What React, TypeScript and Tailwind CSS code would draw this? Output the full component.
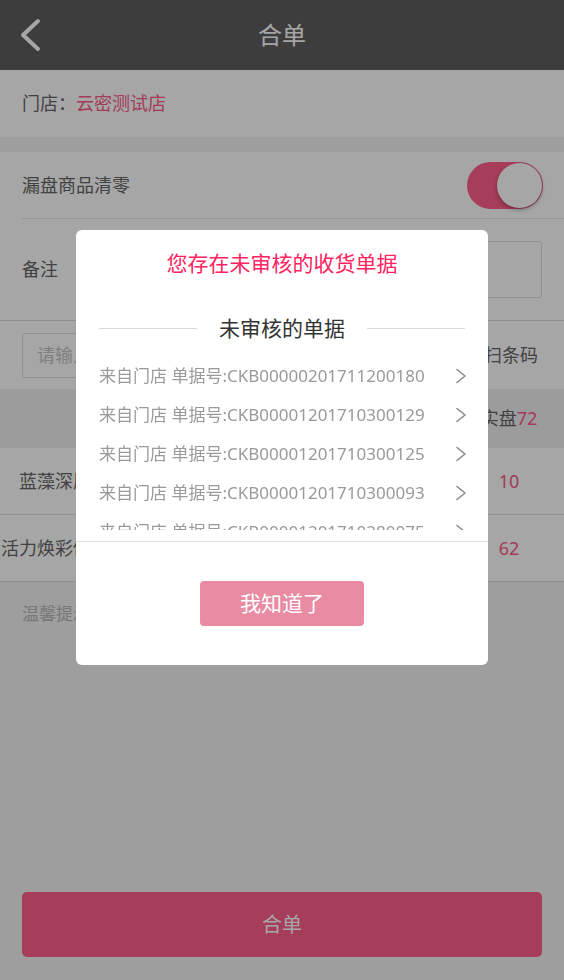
import React from "react";

const bills = [
  "CKB00000201711200180",
  "CKB00001201710300129",
  "CKB00001201710300125",
  "CKB00001201710300093",
  "CKB00001201710280075",
];

const items = [
  { name: "蓝藻深层补水睡眠膜", count: 10 },
  { name: "活力焕彩修护精华乳液霜", count: 62 },
];

function Chevron() {
  return (
    <svg width="12" height="16" viewBox="0 0 12 16" fill="none" stroke="#8a8a8a" strokeWidth="1.6" strokeLinecap="round" strokeLinejoin="round">
      <polyline points="2,1.5 10,8 2,14.5" />
    </svg>
  );
}

export default function App() {
  return (
    <div className="relative flex min-h-screen flex-col bg-[#f3f3f3] font-['Noto_Sans','Noto_Sans_CJK_SC',sans-serif]">
      {/* Header */}
      <header className="grid h-[70px] grid-cols-[80px_1fr_80px] items-center bg-[#5e5e5e]">
        <button className="pl-[18px]">
          <svg width="24" height="34" viewBox="0 0 24 34" fill="none" stroke="#ffffff" strokeWidth="4" strokeLinecap="round" strokeLinejoin="round">
            <polyline points="20,3 5,17 20,31" />
          </svg>
        </button>
        <h1 className="text-center text-[24px] leading-[32px] text-white">合单</h1>
        <div />
      </header>

      {/* Store */}
      <div className="flex h-[67px] items-center bg-white px-[22px] text-[18px]">
        <span className="text-[#666]">门店：</span>
        <span className="text-[#fb5a8a]">云密测试店</span>
      </div>

      {/* Options */}
      <div className="mt-[15px] bg-white">
        <div className="ml-[22px] flex h-[67px] items-center justify-between border-b border-[#e8e8e8] pr-[21px]">
          <span className="text-[18px] text-[#666]">漏盘商品清零</span>
          <div className="flex h-[47px] w-[76px] items-center justify-end rounded-full bg-[#ff5e8a] p-[1px]">
            <div className="h-[45px] w-[45px] rounded-full bg-white shadow-[0_2px_4px_rgba(0,0,0,0.3)]" />
          </div>
        </div>
        <div className="flex h-[102px] items-center border-b border-[#dcdcdc] px-[22px]">
          <span className="text-[18px] text-[#666]">备注</span>
          <div className="ml-auto h-[57px] w-[452px] rounded-[3px] border border-[#dddddd]" />
        </div>
      </div>

      {/* Search */}
      <div className="flex h-[68px] items-center bg-white px-[22px]">
        <div className="flex h-[45px] w-[450px] items-center rounded-[3px] border border-[#dddddd] pl-[14px] text-[18px] text-[#c4c4c4]">
          请输入商品条码
        </div>
        <span className="ml-auto pr-[4px] text-[18px] text-[#666]">扫条码</span>
      </div>

      {/* List */}
      <div className="grid h-[59px] grid-cols-[1fr_110px] items-center bg-[#f0f0f0] text-[18px] text-[#666]">
        <span />
        <span className="text-center">
          实盘<span className="text-[#fb5a8a]">72</span>
        </span>
      </div>
      {items.map((it) => (
        <div key={it.name} className="grid h-[67px] grid-cols-[200px_1fr_110px] items-center border-b border-[#e0e0e0] bg-white text-[18px]">
          <span className="whitespace-nowrap text-center text-[#666]">{it.name}</span>
          <span />
          <span className="text-center text-[#fb5a8a]">{it.count}</span>
        </div>
      ))}

      <p className="px-[22px] pt-[19px] text-[17px] leading-[26px] text-[#b8b8b8]">温馨提示：未盘点的商品将按零处理</p>

      <button className="mx-[22px] mb-[23px] mt-auto h-[65px] rounded-[5px] bg-[#ff5e8a] text-[20px] text-white">合单</button>

      {/* Dialog */}
      <div className="fixed inset-0 z-10 flex justify-center bg-black/35 pt-[230px]">
        <div className="flex h-[435px] w-[412px] flex-col rounded-[6px] bg-white">
          <h2 className="pt-[18px] text-center text-[21px] leading-[30px] text-[#ff2462]">您存在未审核的收货单据</h2>
          <div className="mt-[35px] flex h-[30px] items-center gap-[22px] px-[23px]">
            <div className="h-px flex-1 bg-[#dadada]" />
            <span className="text-[21px] leading-[30px] text-[#333]">未审核的单据</span>
            <div className="h-px flex-1 bg-[#dadada]" />
          </div>
          <div className="mt-[13px] border-b border-[#e0e0e0] pb-[11px]">
            <div className="h-[174px] overflow-hidden">
              {bills.map((b) => (
                <div key={b} className="flex h-[39px] items-center pl-[23px] pr-[21px]">
                  <span className="whitespace-nowrap text-[17px] text-[#9a9a9a]">来自门店 单据号:{b}</span>
                  <span className="ml-auto">
                    <Chevron />
                  </span>
                </div>
              ))}
            </div>
          </div>
          <button className="mx-auto mt-[39px] h-[45px] w-[164px] rounded-[4px] bg-[#e88ba3] text-[21px] text-white">我知道了</button>
        </div>
      </div>
    </div>
  );
}
